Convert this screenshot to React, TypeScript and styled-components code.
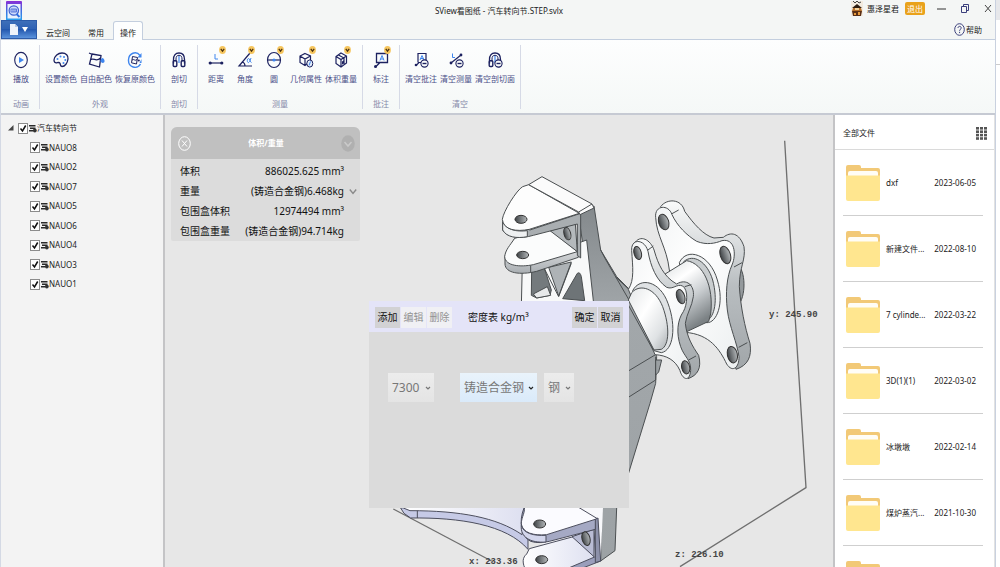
import React from 'react';
import styled, { createGlobalStyle, css } from 'styled-components';

const GlobalStyle = createGlobalStyle`
  *, *::before, *::after { box-sizing: border-box; }
  html, body { margin: 0; background: #fff; }
  body, button, select, input {
    font-family: 'Noto Sans', 'Noto Sans CJK SC', sans-serif;
    font-size: 8px;
    line-height: 12px;
    color: #222;
  }
  button { border: 0; padding: 0; background: none; }
  ul { list-style: none; margin: 0; padding: 0; }
`;

const NAVY = '#1d2260';
const BLUE = '#3f86ee';

/* ---------- window frame ---------- */

const Screen = styled.div`
  display: flex;
  height: 100vh;
  overflow: hidden;
`;

const Window = styled.div`
  flex: 1;
  min-width: 0;
  display: flex;
  flex-direction: column;
  background: #f4f6f5;
  border-left: 1px solid #d4d9e4;
  border-right: 1px solid #c9d1df;
`;

const Backdrop = styled.div`
  width: 4px;
  background: linear-gradient(#e6e7ea 0 20px, #fff 20px 64px, #ccc 64px 65px, #fff 65px);
`;

const TitleBar = styled.header`
  display: grid;
  grid-template-columns: 1fr auto 1fr;
  align-items: center;
  height: 21px;
  padding: 0 3px 0 5px;
`;

const Title = styled.h1`
  margin: 0;
  font-size: 8px;
  font-weight: 400;
`;

const TitleActions = styled.div`
  display: flex;
  justify-content: flex-end;
  align-items: center;
  height: 20px;
  padding-bottom: 4px;
`;

const UserName = styled.span`
  margin: 0 6px 0 4px;
  color: #222;
`;

const LogoutButton = styled.button`
  height: 13px;
  padding: 0 2px;
  border-radius: 2px;
  background: #e9a21b;
  color: #fff;
`;

const WindowButton = styled.button`
  display: grid;
  place-items: center;
  width: 23px;
  height: 16px;
  &:last-child { width: 16px; justify-items: end; }
  &:nth-last-child(3) { margin-left: 5px; }
`;

/* ---------- tabs ---------- */

const TabBar = styled.nav`
  display: flex;
  align-items: flex-end;
  height: 19px;
  border-bottom: 1px solid #c3cede;
`;

const FileMenu = styled.button`
  display: flex;
  align-items: center;
  justify-content: center;
  gap: 4px;
  width: 36px;
  height: 19px;
  border: 1px solid #2d5ba8;
  background: linear-gradient(#3e6fb9, #2f62b4 45%, #2458ae 50%, #5a92dc);
`;

const Tab = styled.button<{ $active?: boolean }>`
  height: 18px;
  padding: 4px 8px 0;
  border: 1px solid transparent;
  border-bottom: 0;
  ${({ $active }) =>
    $active &&
    css`
      height: 19px;
      margin-bottom: -1px;
      padding: 4px 6px 1px;
      border-color: #c3cede;
      border-radius: 3px 3px 0 0;
      background: #fdfefe;
    `}
`;

const HelpButton = styled.button`
  display: flex;
  align-items: center;
  gap: 1px;
  height: 19px;
  margin: 0 13px 0 auto;
`;

/* ---------- ribbon ---------- */

const Ribbon = styled.div`
  display: flex;
  height: 75px;
  padding: 5px 0 4px 2px;
  background: linear-gradient(#fdfefe, #f5f8f7);
  border-bottom: 2px solid #c6cad3;
`;

const RibbonGroup = styled.section`
  display: flex;
  flex-direction: column;
  justify-content: space-between;
  padding: 0 4px;
  border-right: 1px solid #d6dae6;
`;

const GroupTools = styled.div`
  display: flex;
  gap: 1px;
`;

const GroupCaption = styled.h2`
  margin: 0;
  font-size: 8px;
  line-height: 10px;
  font-weight: 400;
  text-align: center;
  color: #8487a8;
`;

const ToolButton = styled.button`
  position: relative;
  display: flex;
  flex-direction: column;
  align-items: center;
  gap: 4px;
  min-width: 28px;
  padding: 6px 1px 0;
  color: #4a4e88;
  white-space: nowrap;
`;

const VipBadge = styled.svg`
  position: absolute;
  top: 1px;
  left: calc(50% + 3px);
`;

/* ---------- body ---------- */

const Body = styled.main`
  flex: 1;
  min-height: 0;
  display: flex;
`;

const TreePanel = styled.aside`
  flex: none;
  width: 164px;
  padding-top: 3px;
  background: #f3f3f3;
  border-right: 2px solid #c4c4c6;
`;

const TreeRoot = styled.div`
  display: flex;
  align-items: center;
  height: 20px;
  padding-left: 7px;
  gap: 4px;
`;

const TreeList = styled.ul`
  display: grid;
  grid-auto-rows: 1fr;
  height: 156px;
  padding-left: 29px;
`;

const TreeItem = styled.li`
  display: flex;
  align-items: center;
`;

const CheckLabel = styled.label`
  display: flex;
  align-items: center;
  svg { flex: none; }
`;

const CheckBox = styled.span`
  display: grid;
  width: 10px;
  height: 11px;
  margin-right: 1px;
  > * { grid-area: 1 / 1; width: 10px; height: 11px; }
  svg { pointer-events: none; visibility: hidden; }
  input:checked + svg { visibility: visible; }
`;

const CheckInput = styled.input`
  appearance: none;
  margin: 0;
  border: 1px solid #8c8c8c;
  background: #fff;
`;

const Viewer = styled.section`
  position: relative;
  flex: 1;
  min-width: 0;
  overflow: hidden;
  background: #e7e7e7;
`;

const ModelView = styled.svg`
  display: block;
  width: 100%;
  height: 100%;
`;

/* ---------- volume card ---------- */

const VolumeCard = styled.section`
  position: absolute;
  top: 12px;
  left: 6px;
  width: 189px;
  border-radius: 6px 6px 2px 2px;
  overflow: hidden;
  background: #dcdcdc;
`;

const CardHeader = styled.header`
  display: flex;
  align-items: center;
  justify-content: space-between;
  height: 32px;
  padding: 0 5px 0 7px;
  background: #c0c0c0;
  color: #fff;
  font-weight: 700;
`;

const RoundButton = styled.button`
  display: grid;
  place-items: center;
`;

const Measures = styled.dl`
  margin: 0;
  padding: 2px 3px 0 9px;
  font-size: 10px;
  color: #111;
`;

const Measure = styled.div`
  display: flex;
  align-items: center;
  height: 20px;
  dd { margin: 0 0 0 auto; }
`;

const MeasureMore = styled.button`
  display: grid;
  place-items: center end;
  width: 13px;
  height: 12px;
`;

const MeasureEnd = styled.span`
  width: 13px;
`;

/* ---------- density dialog ---------- */

const Dialog = styled.section`
  position: absolute;
  top: 186px;
  left: 50%;
  width: 260px;
  height: 207px;
  margin-left: -130px;
  background: #dbdbdb;
`;

const DialogHeader = styled.header`
  display: flex;
  align-items: center;
  gap: 1px;
  height: 31px;
  padding: 1px 6px 0;
  background: #e4e4f8;
`;

const DialogTitle = styled.h2`
  flex: 1;
  margin: 0 0 0 15px;
  font-size: 10px;
  font-weight: 400;
  color: #111;
`;

const DialogButton = styled.button`
  width: 25px;
  height: 21px;
  font-size: 10px;
  background: #d2d2d4;
  color: #111;
  &:disabled { background: #f0f0f4; color: #929292; }
`;

const DialogBody = styled.div`
  display: flex;
  padding: 41px 19px;
`;

const SelectBox = styled.span<{ $width: number; $before?: number; $active?: boolean }>`
  display: grid;
  align-items: center;
  width: ${({ $width }) => $width}px;
  height: 29px;
  margin-left: ${({ $before = 0 }) => $before}px;
  background: ${({ $active }) => ($active ? 'linear-gradient(#e9f3fb, #daeafa)' : 'linear-gradient(#ececec, #e4e4e4)')};
  color: ${({ $active }) => ($active ? '#222' : '#777')};
  > * { grid-area: 1 / 1; }
  svg { justify-self: end; margin-right: 3px; pointer-events: none; }
`;

const Select = styled.select`
  appearance: none;
  width: 100%;
  height: 100%;
  padding: 0 0 0 4px;
  border: 0;
  border-radius: 0;
  background: none;
  font-size: 12px;
  line-height: 16px;
  color: #777;
`;

/* ---------- file panel ---------- */

const FilePanel = styled.aside`
  flex: none;
  width: 162px;
  background: #fff;
  border-left: 2px solid #c4c4c6;
  border-right: 1px solid #e2e2e2;
`;

const FileHeader = styled.header`
  display: flex;
  align-items: center;
  justify-content: space-between;
  height: 35px;
  padding: 2px 7px 0 8px;
  border-bottom: 1px solid #dadada;
`;

const FileHeading = styled.h2`
  margin: 0;
  font-size: 8px;
  font-weight: 400;
`;

const FileList = styled.ul`
  padding: 0 11px 0 8px;
`;

const FileRow = styled.li`
  display: grid;
  grid-template-columns: 34px 1fr auto;
  align-items: center;
  column-gap: 6px;
  height: 66px;
  padding: 0 7px 0 3px;
  border-bottom: 1px solid #cfcfcf;
  white-space: nowrap;
`;

/* ---------- icons ---------- */

type IconName =
  | 'play' | 'palette' | 'bucket' | 'restore' | 'section' | 'distance' | 'angle'
  | 'circle' | 'geometry' | 'volume' | 'note' | 'clearNote' | 'clearMeasure' | 'clearSection';

const Headphones = () => (
  <g fill="none" stroke={NAVY}>
    <path d="M3.500 12.500V8.500C3.500 4 5.500 2 9 2s5.500 2 5.500 6.500v4" strokeWidth="1.300" />
    <path d="M6 10.500V8c0-2.500 1-3.700 3-3.700S12 5.500 12 8v2.500" />
    <rect x="3.200" y="9.800" width="3.600" height="5.700" rx="1" strokeWidth="1.400" />
    <rect x="11.200" y="9.800" width="3.600" height="5.700" rx="1" strokeWidth="1.400" />
    <path d="M9 5v7" stroke={BLUE} strokeWidth="1.200" />
  </g>
);

const Minus = () => (
  <g stroke={NAVY} strokeWidth="1.1">
    <circle cx="12.500" cy="12.500" r="3.600" fill="#fbfdfc" />
    <path d="M10.500 12.500h4" strokeWidth="1.400" />
  </g>
);

const iconArt: Record<IconName, React.ReactNode> = {
  play: (
    <>
      <ellipse cx="9" cy="9" rx="6.300" ry="7.600" fill="none" stroke={NAVY} strokeWidth="1.100" />
      <path d="M7 6l5 3-5 3z" fill={BLUE} />
    </>
  ),
  palette: (
    <>
      <path d="M10 2c4 0 6.500 2.500 6 6-.5 4-3 7.500-6 7.500-2 0-1.500-2-2-3.200-.7-1.300-2-.8-3.200-.5C3 12 2 11 2 9c.5-4 4-7 8-7z" fill="none" stroke={NAVY} strokeWidth="1.300" />
      <g fill={BLUE}>
        <circle cx="5.500" cy="8" r="1" /><circle cx="8.500" cy="5.500" r="1" />
        <circle cx="12" cy="6" r="1" /><circle cx="13.300" cy="9" r="1" /><circle cx="11.500" cy="12" r="1" />
      </g>
    </>
  ),
  bucket: (
    <>
      <path d="M2 2l3.500 1.500M5 3l9 1.500L12.500 16 2.500 13zM4 8.500c3-2 5 3 9.500-1.500" fill="none" stroke={NAVY} strokeWidth="1.300" />
      <path d="M15.500 7c-2.500 1-3 4.500 0 5 3 0 2.500-4 0-5z" fill={BLUE} />
    </>
  ),
  restore: (
    <>
      <path d="M14 4.500A6.500 7.300 0 0 0 2.500 9M2.500 9A6.500 7 0 0 0 14.500 13" fill="none" stroke={BLUE} strokeWidth="1.400" />
      <path d="M15.500 2v4.500h-4zM15.500 8v4h-2z" fill={BLUE} />
      <path d="M6.500 5.500l5 1-1 6.500-5-1.200zM6 9c2-1.500 3 1.500 5-.5" fill="none" stroke={NAVY} />
      <circle cx="12.800" cy="9.500" r="1" fill={NAVY} />
    </>
  ),
  section: <Headphones />,
  distance: (
    <>
      <path d="M3 12h12" stroke={NAVY} strokeWidth="1.200" />
      <circle cx="3.200" cy="12" r="1.600" fill={NAVY} /><circle cx="14.800" cy="12" r="1.600" fill={NAVY} />
      <path d="M8 3v5h3" fill="none" stroke={BLUE} />
    </>
  ),
  angle: (
    <>
      <path d="M14 2L3 15h13M6.500 11c2 .8 2.500 2 2.500 4" fill="none" stroke={NAVY} strokeWidth="1.200" />
      <path d="M15 7c-1 3-2 5-3 4.500s-1-3.800.5-4S14 11.500 15.500 11.500" fill="none" stroke={BLUE} />
    </>
  ),
  circle: (
    <>
      <ellipse cx="9" cy="9" rx="6.500" ry="7.500" fill="none" stroke={NAVY} strokeWidth="1.200" />
      <path d="M3 9h12" stroke={NAVY} strokeWidth="1.200" />
      <circle cx="9" cy="9" r="1.600" fill={BLUE} />
    </>
  ),
  geometry: (
    <>
      <path d="M8 2.500l5.500 2.500v5L8 14.500 3 11.500V5zM3 5l5 3 5.500-3M8 8v6.500" fill="none" stroke={NAVY} strokeWidth="1.200" />
      <ellipse cx="12.800" cy="12.500" rx="3" ry="3.600" fill="#e4eefb" stroke={NAVY} />
      <path d="M12 14.500l1.500-4" stroke={BLUE} />
    </>
  ),
  volume: (
    <>
      <path d="M9 2l5.500 3v7L9 16l-5-3.500V5.500zM4 5.500L9 8.500 14.500 5M9 8.500V16M6.500 4L12 7v7" fill="none" stroke={NAVY} strokeWidth="1.200" />
      <path d="M10 10.500l2-1.300v3l-2 1.500z" fill={NAVY} />
    </>
  ),
  note: (
    <>
      <path d="M8 11.500H4.500V2.500h11v9H8L3.500 16" fill="none" stroke={NAVY} strokeWidth="1.300" />
      <circle cx="3.500" cy="15.500" r="1.500" fill={NAVY} />
      <path d="M8 9.500l2-5 2 5M8.500 8h3" fill="none" stroke={BLUE} />
    </>
  ),
  clearNote: (
    <>
      <path d="M6 11.500v-9h8v9H7L4 14.500" fill="none" stroke={NAVY} strokeWidth="1.200" />
      <circle cx="4" cy="14" r="1.300" fill={NAVY} />
      <path d="M8 9l2-4.500L12 9M8.600 7.500h2.800" fill="none" stroke={BLUE} />
      <Minus />
    </>
  ),
  clearMeasure: (
    <>
      <path d="M4 12L14 4" stroke={NAVY} strokeWidth="1.200" />
      <circle cx="4" cy="12" r="1.400" fill={NAVY} /><circle cx="14" cy="4" r="1.400" fill={NAVY} />
      <path d="M5.500 2.500v4H8" fill="none" stroke={BLUE} />
      <Minus />
    </>
  ),
  clearSection: (
    <>
      <Headphones />
      <Minus />
    </>
  ),
};

interface Tool { label: string; icon: IconName; vip?: boolean }

const groups: { caption: string; tools: Tool[] }[] = [
  { caption: '动画', tools: [{ label: '播放', icon: 'play' }] },
  {
    caption: '外观',
    tools: [
      { label: '设置颜色', icon: 'palette' },
      { label: '自由配色', icon: 'bucket' },
      { label: '恢复原颜色', icon: 'restore' },
    ],
  },
  { caption: '剖切', tools: [{ label: '剖切', icon: 'section' }] },
  {
    caption: '测量',
    tools: [
      { label: '距离', icon: 'distance', vip: true },
      { label: '角度', icon: 'angle', vip: true },
      { label: '圆', icon: 'circle', vip: true },
      { label: '几何属性', icon: 'geometry', vip: true },
      { label: '体积重量', icon: 'volume', vip: true },
    ],
  },
  { caption: '批注', tools: [{ label: '标注', icon: 'note', vip: true }] },
  {
    caption: '清空',
    tools: [
      { label: '清空批注', icon: 'clearNote' },
      { label: '清空测量', icon: 'clearMeasure' },
      { label: '清空剖切面', icon: 'clearSection' },
    ],
  },
];

const parts = ['NAUO8', 'NAUO2', 'NAUO7', 'NAUO5', 'NAUO6', 'NAUO4', 'NAUO3', 'NAUO1'];

const files = [
  ['dxf', '2023-06-05'],
  ['新建文件...', '2022-08-10'],
  ['7 cylinde...', '2022-03-22'],
  ['3D(1)(1)', '2022-03-02'],
  ['冰墩墩', '2022-02-14'],
  ['煤炉蒸汽...', '2021-10-30'],
  ['', ''],
];

const Logo = () => (
  <svg width="16" height="20" viewBox="0 0 16 20">
    <defs>
      <linearGradient id="logo" x1="0" y1="0" x2="0" y2="1">
        <stop offset="0" stopColor="#8a2fd6" />
        <stop offset=".5" stopColor="#3e6fe0" />
        <stop offset="1" stopColor="#25a6f0" />
      </linearGradient>
    </defs>
    <rect width="16" height="20" rx="1" fill="url(#logo)" />
    <rect x="1.500" y="3" width="13" height="14.500" fill="#e9f1fd" />
    <circle cx="7.800" cy="9.500" r="4.700" fill="#cfdcfa" stroke="#3c5fd0" strokeWidth="1.200" />
    <path d="M5 8h5.500v3H5zM7 8v3M9 8v3" fill="none" stroke="#5b79dc" />
    <path d="M10.500 13l3 3" stroke="#2d6fe0" strokeWidth="2" />
  </svg>
);

const Avatar = () => (
  <svg width="12" height="15" viewBox="0 0 12 15">
    <rect width="12" height="15" fill="#f3ebdf" />
    <path d="M2 0l2 2 2-2 2 2 2-1" fill="none" stroke="#444" />
    <path d="M6 3l5 4H1z" fill="#2e1c0e" />
    <path d="M2 7h8l1 3H1z" fill="#b7702a" />
    <path d="M4 7h4v2H4z" fill="#f4d39b" />
    <path d="M1 10h10l-1 5H2z" fill="#5b2f14" />
    <path d="M3 12h2v2H3zM7 11h2v3H7z" fill="#e89b3c" />
  </svg>
);

const PartIcon = () => (
  <svg width="8" height="9" viewBox="0 0 8 9">
    <path d="M0 1h6.500v1.500H0zM1 3.500h5.500V5H1zM0 6h4v1.500H0z" fill="#2a2a2a" />
    <circle cx="5.800" cy="6.500" r="1.900" fill="#333" />
  </svg>
);

const Folder = () => (
  <svg width="34" height="36" viewBox="0 0 34 36">
    <path d="M0 2a2 2 0 0 1 2-2h11a2 2 0 0 1 2 2v1h17a2 2 0 0 1 2 2v14H0z" fill="#f2c977" />
    <rect x="2" y="6" width="30" height="9" rx="2" fill="#fffdf6" />
    <path d="M0 10.500h34V34a2 2 0 0 1-2 2H2a2 2 0 0 1-2-2z" fill="#ffe68f" />
  </svg>
);

const TickBox = ({ label }: { label: string }) => (
  <CheckLabel>
    <CheckBox>
      <CheckInput type="checkbox" defaultChecked />
      <svg viewBox="0 0 10 11"><path d="M2.500 5.500l2 2.500 3.200-5.500" fill="none" stroke="#111" strokeWidth="1.500" /></svg>
    </CheckBox>
    <PartIcon />
    <span>{label}</span>
  </CheckLabel>
);

const Chevron = () => (
  <svg width="6" height="6" viewBox="0 0 6 6">
    <path d="M1 2l2 2 2-2" fill="none" stroke="currentColor" strokeWidth="1.200" />
  </svg>
);

/* A bored hole seen at an angle. */
const Hole = ({ x, y, rx, ry, turn = 0 }: { x: number; y: number; rx: number; ry: number; turn?: number }) => (
  <ellipse cx={x} cy={y} rx={rx} ry={ry} transform={`rotate(${turn} ${x} ${y})`} fill="url(#bore)" stroke="#333" strokeWidth="3" />
);

const bigFlange =
  'M497 262C493 225 536 222 546 254C562 288 590 316 620 334C650 346 676 340 696 332C734 324 740 372 726 405C710 440 706 490 712 540C718 590 742 640 747 680C748 712 728 730 710 702C690 660 660 612 585 607L538 420C530 350 500 320 497 262Z';
const smallFlange =
  'M425 362C422 324 464 326 474 364C482 410 500 452 530 472C550 480 560 460 578 468C596 480 592 524 580 545C562 570 558 610 572 650C582 680 604 690 602 722C598 760 576 746 570 722C556 690 530 676 495 674L415 478C434 450 428 410 425 362Z';

const Model = () => (
  <ModelView viewBox="0 0 668 452" preserveAspectRatio="xMidYMin slice" role="img" aria-label="汽车转向节">
    <defs>
      <linearGradient id="bore"><stop offset="0" stopColor="#3d4144" /><stop offset="1" stopColor="#b4b8ba" /></linearGradient>
      <linearGradient id="side" x1="0" y1="0" x2="0" y2="1"><stop offset="0" stopColor="#84898c" /><stop offset=".3" stopColor="#a2a7aa" /><stop offset="1" stopColor="#9da2a5" /></linearGradient>
      <linearGradient id="edge" x1="0" y1="0" x2="0" y2="1"><stop offset="0" stopColor="#fafbfb" /><stop offset=".5" stopColor="#b9bec1" /><stop offset="1" stopColor="#a1a6a9" /></linearGradient>
      <linearGradient id="face" x1="0" y1="0" x2="1" y2="1"><stop offset="0" stopColor="#f2f4f5" /><stop offset=".4" stopColor="#fff" /><stop offset="1" stopColor="#eceff0" /></linearGradient>
      <linearGradient id="shaft" x1="0" y1="0" x2=".5" y2="1"><stop offset="0" stopColor="#d6dadc" /><stop offset=".35" stopColor="#fff" /><stop offset=".65" stopColor="#c9cdd0" /><stop offset="1" stopColor="#7c8285" /></linearGradient>
      <linearGradient id="boss" x1="0" y1="0" x2="1" y2="1"><stop offset="0" stopColor="#e4e7e8" /><stop offset=".4" stopColor="#fff" /><stop offset=".75" stopColor="#dfe2e4" /><stop offset="1" stopColor="#a9aeb1" /></linearGradient>
      <linearGradient id="rim" x1="0" y1="0" x2="0" y2="1"><stop offset="0" stopColor="#fff" /><stop offset="1" stopColor="#a9aeb2" /></linearGradient>
      <linearGradient id="lilac"><stop offset="0" stopColor="#fff" /><stop offset="1" stopColor="#dddff0" /></linearGradient>
    </defs>

    <g transform="translate(325 15) scale(.33333)" stroke="#4a4e50" strokeWidth="3" strokeLinejoin="round">
      {/* bounding box edges */}
      <path d="M884 32L914 540L948 1073L570 1310" fill="none" stroke="#6f6f6f" strokeWidth="4" />

      {/* far flange */}
      <path d="M740 400C768 420 770 500 742 530L700 540V400Z" fill="#94999c" />
      <path d="M512 230C530 205 575 205 584 244C610 280 640 316 672 324L700 322C722 304 748 308 762 350C768 390 748 410 748 470C752 530 764 590 780 640C786 680 774 706 738 718L690 480L520 260Z" fill="url(#edge)" />
      <path d={bigFlange} fill="url(#face)" />
      <path d="M546 251L566 240M732 411L756 398M746 652L772 638" fill="none" />
      <path d="M568 398C590 350 660 372 682 450C704 520 680 580 650 578L600 560Z" fill="#eef0f1" />
      <path d="M580 396C610 368 652 396 668 450C684 510 674 562 650 572L600 560Z" fill="#c9cdcf" />
      <Hole x={521} y={276} rx={15} ry={24} turn={-18} />
      <Hole x={706} y={375} rx={15} ry={27} turn={-18} />
      <Hole x={727} y={674} rx={15} ry={25} turn={-12} />
      <path d="M519 436L590 392C640 400 672 470 662 552L656 574L586 607C540 600 500 520 519 436Z" fill="url(#shaft)" />

      {/* upright: side face */}
      <path d="M265 250L312 228L332 360L380 440L430 490L500 680L497 760L480 820L415 1032L380 1134L375 1262L332 1293L335 1134L310 560Z" fill="url(#side)" />
      <path d="M332 360L345 385L420 515M415 525L492 665M415 723L495 675M415 802L497 750M497 680V750M376 440L440 500" fill="none" />
      <path d="M497 690L515 690L506 726L497 735Z" fill="#9ba0a3" />

      {/* near flange */}
      <path d="M436 336C456 312 486 334 494 366C504 400 520 440 560 462C590 444 614 466 610 500C606 530 590 550 586 580C590 620 608 650 626 676C636 716 622 736 594 746L540 560L430 360Z" fill="url(#edge)" />
      <path d={smallFlange} fill="url(#face)" />
      <path d="M474 360L490 348M584 470L604 464M596 690L618 678" fill="none" />
      <path d="M428 482C450 440 510 452 534 520C560 590 550 662 514 668L492 662Z" fill="#dfe2e4" />
      <path d="M425 488C450 460 496 474 518 530C540 590 538 646 514 658L492 660L415 510Z" fill="url(#boss)" />
      <Hole x={443} y={369} rx={11} ry={20} turn={-15} />
      <Hole x={572} y={500} rx={12} ry={22} turn={-18} />
      <Hole x={587} y={712} rx={12} ry={20} turn={-12} />

      {/* upright: ribbed front */}
      <path d="M97 400L290 330L312 530H94Z" fill="#f8f9f9" />
      <path d="M125 420L160 405L184 480L180 496L140 504L124 496Z" fill="#747a7d" />
      <path d="M130 492L172 470L182 496L140 504Z" fill="#e7e9ea" />
      <path d="M176 412L244 396L206 498Z" fill="#aeb3b6" />
      <path d="M218 506L262 430Q270 424 274 440L284 512Z" fill="#6e7477" />
      <path d="M160 410L206 500M244 400L206 500" fill="none" />

      {/* upper fork, lower plate */}
      <path d="M74 325L178 300L262 350L265 382L140 424C90 436 46 430 45 402V378Z" fill="url(#rim)" />
      <path d="M74 325L180 296L262 365L130 404C90 412 46 408 44 380C46 360 60 346 74 325Z" fill="#fbfcfc" />
      <path d="M180 302L256 282L262 365Z" fill="#b4b9bc" />
      <path d="M122 406V428" />
      <Hole x={98} y={375} rx={18} ry={11} />
      <Hole x={232} y={311} rx={10} ry={19} turn={-15} />

      {/* upper fork, top plate */}
      <path d="M38 272L38 300C50 322 90 328 130 316L262 282V376L272 384V250L120 300Z" fill="#a9aeb1" />
      <path d="M38 276L38 300C50 322 80 326 112 320V302C80 306 50 300 38 276Z" fill="#eef0f1" />
      <path d="M98 170L116 164L268 250L118 298C80 306 40 300 37 268C40 244 80 180 98 170Z" fill="#fdfdfd" />
      <path d="M116 164L156 140L306 222L312 234L270 254L266 246Z" fill="#fbfbfb" />
      <path d="M266 246L306 222" />
      <Hole x={93} y={268} rx={18} ry={12} />
    </g>

    {/* lower arm and fork */}
    <g transform="translate(195 365) scale(.33333)" stroke="#4b4d5c" strokeWidth="3" strokeLinejoin="round">
      <path d="M100 87L400 246" stroke="#6f6f6f" strokeWidth="4" />
      <path d="M560 60H730L722 243L600 270L500 120Z" fill="#f8f8fb" stroke="none" />
      <path d="M122 84L132 100L152 114C300 112 440 134 504 208V150L300 70Z" fill="#c6cae6" />
      <path d="M130 60V84L150 92C300 92 410 112 486 164L500 60Z" fill="url(#lilac)" />
      <path d="M172 92V114" />
      <path d="M508 206L640 170L702 150L708 244L600 275H500C484 248 488 232 500 222Z" fill="url(#lilac)" />
      <path d="M600 275L706 230L722 243L640 275Z" fill="#9a9ebb" />
      <path d="M636 170L702 148V230Z" fill="#b9bcd4" />
      <path d="M492 84C476 124 482 170 512 184C530 190 550 188 568 184L706 148L712 116Z" fill="#a5a9c4" />
      <path d="M492 70C498 100 484 108 484 132C488 158 520 168 560 164L712 116L636 70Z" fill="#fbfbff" />
      <path d="M484 136C480 170 510 190 558 186V166C520 168 490 160 484 136Z" fill="#d3d6ec" />
      <path d="M706 118L714 114L722 243L706 248Z" fill="#8d91aa" />
      <Hole x={539} y={132} rx={18} ry={12} />
      <Hole x={545} y={239} rx={18} ry={12} />
      <Hole x={678} y={176} rx={12} ry={21} turn={-15} />
    </g>

    <g fontFamily="'Liberation Mono', monospace" fontSize="9" fontWeight="700" fill="#444">
      <text x="604" y="202">y: 245.90</text>
      <text x="510" y="442">z: 226.10</text>
      <text x="304" y="449">x: 233.36</text>
    </g>
  </ModelView>
);

const App = () => (
  <Screen>
    <GlobalStyle />
    <Window>
      <TitleBar>
        <Logo />
        <Title>SView看图纸 - 汽车转向节.STEP.svlx</Title>
        <TitleActions>
          <Avatar />
          <UserName>惠泽星君</UserName>
          <LogoutButton>退出</LogoutButton>
          <WindowButton aria-label="最小化">
            <svg width="9" height="9" viewBox="0 0 9 9"><path d="M0 5h9" stroke="#333" /></svg>
          </WindowButton>
          <WindowButton aria-label="还原">
            <svg width="8" height="9" viewBox="0 0 8 9"><path d="M.5 2.500h5v6h-5zM2.500 2.500v-2h5v6h-2" fill="none" stroke="#3b3f7c" /></svg>
          </WindowButton>
          <WindowButton aria-label="关闭">
            <svg width="8" height="9" viewBox="0 0 8 9"><path d="M1 1l6 7M7 1L1 8" stroke="#444" /></svg>
          </WindowButton>
        </TitleActions>
      </TitleBar>

      <TabBar>
        <FileMenu aria-label="文件">
          <svg width="8" height="11" viewBox="0 0 8 11"><path d="M0 0h5l3 3v8H0z" fill="#eef3fa" /><path d="M5 0v3h3z" fill="#b7c9e6" /></svg>
          <svg width="6" height="5" viewBox="0 0 6 5"><path d="M0 0h6L3 5z" fill="#fff" /></svg>
        </FileMenu>
        <Tab>云空间</Tab>
        <Tab>常用</Tab>
        <Tab $active>操作</Tab>
        <HelpButton>
          <svg width="11" height="13" viewBox="0 0 11 13">
            <ellipse cx="5.500" cy="6.500" rx="4.800" ry="5.800" fill="none" stroke="#3b3f7c" />
            <path d="M4 5c0-2.200 3.200-2.200 3.200 0 0 1.400-1.600 1.200-1.600 2.800M5.600 8.800v1.300" fill="none" stroke="#3b3f7c" />
          </svg>
          帮助
        </HelpButton>
      </TabBar>

      <Ribbon>
        {groups.map((group) => (
          <RibbonGroup key={group.caption}>
            <GroupTools>
              {group.tools.map((tool) => (
                <ToolButton key={tool.label}>
                  <svg width="18" height="18" viewBox="0 0 18 18">{iconArt[tool.icon]}</svg>
                  {tool.label}
                  {tool.vip && (
                    <VipBadge width="7" height="8" viewBox="0 0 7 8">
                      <ellipse cx="3.500" cy="4" rx="3.400" ry="3.900" fill="#f6c65f" />
                      <path d="M1.800 2.800l1.700 2.400 1.700-2.400" fill="none" stroke="#4a3210" strokeWidth="1.200" />
                    </VipBadge>
                  )}
                </ToolButton>
              ))}
            </GroupTools>
            <GroupCaption>{group.caption}</GroupCaption>
          </RibbonGroup>
        ))}
      </Ribbon>

      <Body>
        <TreePanel>
          <TreeRoot>
            <svg width="6" height="6" viewBox="0 0 6 6"><path d="M5.500 0v5.500H0z" fill="#444" /></svg>
            <TickBox label="汽车转向节" />
          </TreeRoot>
          <TreeList>
            {parts.map((part) => (
              <TreeItem key={part}><TickBox label={part} /></TreeItem>
            ))}
          </TreeList>
        </TreePanel>

        <Viewer>
          <Model />
          <VolumeCard>
            <CardHeader>
              <RoundButton aria-label="关闭">
                <svg width="13" height="15" viewBox="0 0 13 15" fill="none" stroke="#fff">
                  <ellipse cx="6.500" cy="7.500" rx="5.800" ry="6.800" /><path d="M4 4.500l5 6M9 4.500l-5 6" />
                </svg>
              </RoundButton>
              体积/重量
              <RoundButton aria-label="收起">
                <svg width="14" height="17" viewBox="0 0 14 17">
                  <ellipse cx="7" cy="8.500" rx="6.800" ry="8.200" fill="#b0b0b0" />
                  <path d="M3.500 7L7 11l3.500-4" fill="none" stroke="#cacaca" strokeWidth="1.500" />
                </svg>
              </RoundButton>
            </CardHeader>
            <Measures>
              <Measure><dt>体积</dt><dd>886025.625 mm³</dd><MeasureEnd /></Measure>
              <Measure>
                <dt>重量</dt><dd>(铸造合金钢)6.468kg</dd>
                <MeasureMore aria-label="密度表">
                  <svg width="8" height="7" viewBox="0 0 8 7"><path d="M.8 1.500L4 5.500l3.200-4" fill="none" stroke="#8a8a8a" strokeWidth="1.400" /></svg>
                </MeasureMore>
              </Measure>
              <Measure><dt>包围盒体积</dt><dd>12974494 mm³</dd><MeasureEnd /></Measure>
              <Measure><dt>包围盒重量</dt><dd>(铸造合金钢)94.714kg</dd><MeasureEnd /></Measure>
            </Measures>
          </VolumeCard>

          <Dialog>
            <DialogHeader>
              <DialogButton>添加</DialogButton>
              <DialogButton disabled>编辑</DialogButton>
              <DialogButton disabled>删除</DialogButton>
              <DialogTitle>密度表 kg/m³</DialogTitle>
              <DialogButton>确定</DialogButton>
              <DialogButton>取消</DialogButton>
            </DialogHeader>
            <DialogBody>
              <SelectBox $width={46}>
                <Select aria-label="密度"><option>7300</option></Select><Chevron />
              </SelectBox>
              <SelectBox $width={77} $before={26} $active>
                <Select aria-label="材料"><option>铸造合金钢</option></Select><Chevron />
              </SelectBox>
              <SelectBox $width={30} $before={7}>
                <Select aria-label="类别"><option>钢</option></Select><Chevron />
              </SelectBox>
            </DialogBody>
          </Dialog>
        </Viewer>

        <FilePanel>
          <FileHeader>
            <FileHeading>全部文件</FileHeading>
            <svg width="11" height="13" viewBox="0 0 11 13" fill="#555">
              {[0, 4, 8].map((x) => [0, 3.400, 6.800, 10.200].map((y) => <rect key={`${x}-${y}`} x={x} y={y} width="3" height="2.600" />))}
            </svg>
          </FileHeader>
          <FileList>
            {files.map(([name, date]) => (
              <FileRow key={name + date}>
                <Folder />
                <span>{name}</span>
                <time>{date}</time>
              </FileRow>
            ))}
          </FileList>
        </FilePanel>
      </Body>
    </Window>
    <Backdrop />
  </Screen>
);

export default App;
